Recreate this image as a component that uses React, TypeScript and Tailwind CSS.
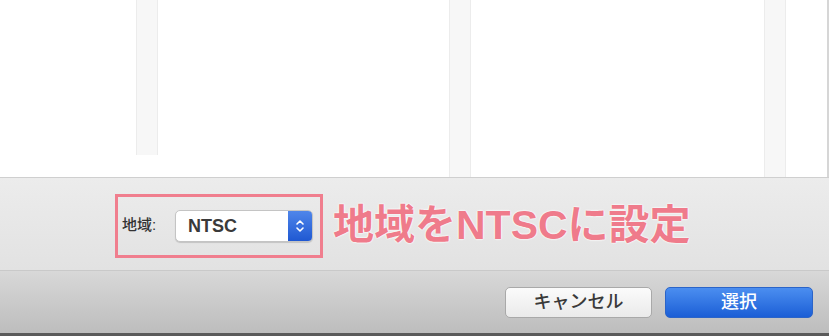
import React from "react";

const font = { fontFamily: '"Liberation Sans", "Noto Sans CJK JP", sans-serif' };

function Strip({ short }: { short?: boolean }) {
  return (
    <div
      className={`w-[22px] shrink-0 border-x border-[#ececec] bg-[#f7f7f7] ${short ? "h-[155px]" : "h-full"}`}
    />
  );
}

export default function App() {
  return (
    <div className="w-[829px] h-[336px] overflow-hidden bg-white flex flex-col" style={font}>
      {/* file browser columns */}
      <div className="h-[178px] flex border-b border-[#cfcfcf]">
        <div className="w-[136px] shrink-0" />
        <Strip short />
        <div className="w-[291px] shrink-0" />
        <Strip />
        <div className="w-[293px] shrink-0" />
        <Strip />
        <div className="flex-1 border-r-2 border-[#d6d6d6]" />
      </div>

      {/* options area */}
      <div className="h-[93px] bg-gradient-to-b from-[#ececec] to-[#e2e2e2] border-b border-[#c9c9c9] flex items-center">
        <div className="ml-[115px] mt-[3px] w-[208px] h-[64px] border-[3px] border-[#f07e8e] flex items-center pl-[4px]">
          <span className="w-[53px] shrink-0 text-[15px] font-medium text-[#333]">地域:</span>
          <div className="w-[138px] h-[32px] rounded-[5px] bg-white border border-[#c4c4c4] shadow-[0_1px_1px_rgba(0,0,0,0.15)] flex overflow-hidden">
            <span className="flex-1 pl-[12px] text-[18px] font-bold text-[#3a3a3a] leading-[30px]">NTSC</span>
            <div className="w-[24px] bg-gradient-to-b from-[#4f86ea] to-[#1f58d2] flex items-center justify-center">
              <svg width="10" height="16" viewBox="0 0 10 16" fill="none" stroke="white" strokeWidth="1.6" strokeLinecap="round" strokeLinejoin="round">
                <path d="M2 6 L5 3 L8 6" />
                <path d="M2 10 L5 13 L8 10" />
              </svg>
            </div>
          </div>
        </div>
        <span
          className="ml-[10px] mt-[3px] text-[41px] font-bold text-[#ef7b8b]"
          style={{ textShadow: "0 0 2px #fff, 0 0 2px #fff, 0 0 1px #fff" }}
        >
          地域をNTSCに設定
        </span>
      </div>

      {/* button bar */}
      <div className="h-[62px] bg-gradient-to-b from-[#d8d8d8] to-[#bdbdbd] flex items-center justify-end pr-[16px] gap-[13px]">
        <button className="w-[147px] h-[31px] rounded-[5px] bg-gradient-to-b from-[#fbfbfb] to-[#eaeaea] border border-[#a9a9a9] text-[18px] font-medium text-[#3a3a3a]">
          キャンセル
        </button>
        <button className="w-[148px] h-[31px] rounded-[5px] bg-gradient-to-b from-[#4b8ef0] to-[#1b5ed6] border border-[#2b64c8] text-[18px] font-medium text-white">
          選択
        </button>
      </div>
      <div className="flex-1 bg-[#5a5a5a]" />
    </div>
  );
}
